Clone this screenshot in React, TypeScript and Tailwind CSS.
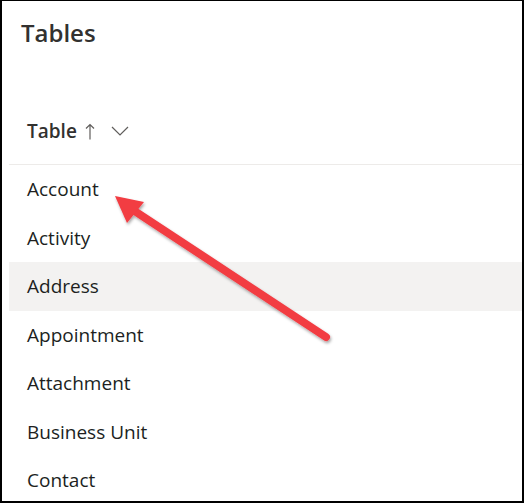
const rows = ['Account', 'Activity', 'Address', 'Appointment', 'Attachment', 'Business Unit', 'Contact'];

function CalloutArrow() {
  return (
    <svg className="pointer-events-none absolute left-0 top-0" width="524" height="503" viewBox="0 0 524 503">
      <defs>
        <filter id="shadow" x="-10%" y="-10%" width="120%" height="120%">
          <feDropShadow dx="1" dy="2" stdDeviation="1.5" floodColor="#000" floodOpacity="0.35" />
        </filter>
      </defs>
      <g filter="url(#shadow)">
        <line x1="324" y1="336" x2="128" y2="207" stroke="#f23c43" strokeWidth="8" strokeLinecap="round" />
        <polygon points="113,195 142,201 125,222" fill="#f23c43" />
      </g>
    </svg>
  );
}

export default function App() {
  return (
    <div className="relative h-[503px] w-[524px] overflow-hidden border-2 border-t border-black bg-white font-['Open_Sans',sans-serif] text-[#201f1e]">
      <h1 className="pl-[19px] pt-[14px] text-[24px] font-semibold leading-[36px] text-[#323130]">Tables</h1>
      <div className="mt-[66px] flex items-center pl-[25px] text-[19px] font-semibold leading-[28px] text-[#323130]">
        <span>Table</span>
        <svg className="ml-[8px]" width="10" height="17" viewBox="0 0 10 17" fill="none">
          <path d="M5 1.5v15M1 5.5l4-4 4 4" stroke="#605e5c" strokeWidth="1.2" />
        </svg>
        <svg className="ml-[16px]" width="18" height="10" viewBox="0 0 18 10" fill="none">
          <path d="M1 1l8 8 8-8" stroke="#605e5c" strokeWidth="1.2" />
        </svg>
      </div>
      <div className="ml-[7px] mt-[19px] border-t border-[#edebe9]">
        {rows.map((r) => (
          <div
            key={r}
            className={`flex h-[48.5px] items-center pl-[18px] text-[19px] ${r === 'Address' ? 'bg-[#f3f2f1]' : ''}`}
          >
            {r}
          </div>
        ))}
      </div>
      <CalloutArrow />
    </div>
  );
}
